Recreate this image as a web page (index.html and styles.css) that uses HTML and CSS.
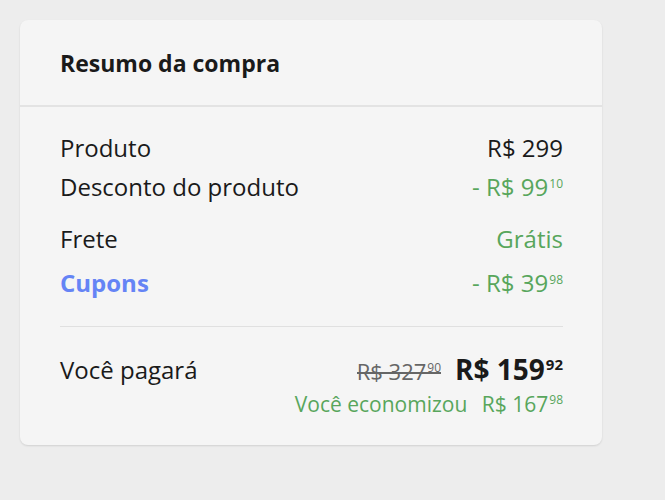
FILE: index.html
```html
<!DOCTYPE html>
<html lang="pt-BR">
<head>
    <meta charset="UTF-8">
    <meta name="viewport" content="width=device-width, initial-scale=1.0">
    <title>Resumo da compra</title>
    <link rel="stylesheet" href="styles.css">
</head>
<body>
    <div class="resumo">
        <div class="resumo-head">
            <h2>Resumo da compra</h2>
        </div>
        <div class="resumo-body">
            <ul class="linhas">
                <li class="linha">
                    <span>Produto</span>
                    <span class="valor">R$ 299</span>
                </li>
                <li class="linha">
                    <span>Desconto do produto</span>
                    <span class="valor verde">- R$ 99<sup>10</sup></span>
                </li>
                <li class="linha frete">
                    <span>Frete</span>
                    <span class="valor verde">Grátis</span>
                </li>
                <li class="linha cupons">
                    <span class="azul">Cupons</span>
                    <span class="valor verde">- R$ 39<sup>98</sup></span>
                </li>
            </ul>
            <div class="total">
                <span>Você pagará</span>
                <div class="total-valores">
                    <div class="precos">
                        <s class="antigo">R$ 327<sup>90</sup></s>
                        <strong class="final">R$ 159<sup>92</sup></strong>
                    </div>
                    <div class="economia">Você economizou <span>R$ 167<sup>98</sup></span></div>
                </div>
            </div>
        </div>
    </div>
</body>
</html>
```

FILE: styles.css
```css
*{
    margin:0;
    padding:0;
    list-style:none;
    box-sizing: border-box;
}
body{
    background-color: #ededed;
    font-family: "Open Sans", "Noto Sans", sans-serif;
    color: #1a1a1a;
    padding: 20px;
}
.resumo{
    width: 582px;
    background-color: #f5f5f5;
    border-radius: 8px;
    box-shadow: 0 1px 2px rgba(0,0,0,0.12);
}
.resumo-head{
    padding: 28px 40px 0;
    height: 87px;
    border-bottom: 2px solid #e3e3e3;
}
.resumo-head h2{
    font-size: 23px;
    font-weight: 700;
    line-height: 30px;
}
.resumo-body{
    padding: 21px 39px 28px 40px;
}
.linha{
    display: flex;
    justify-content: space-between;
    font-size: 24px;
    line-height: 39px;
}
.linha.frete{
    margin-top: 13px;
}
.linha.cupons{
    margin-top: 5px;
}
.linhas{
    padding-bottom: 24px;
    border-bottom: 1px solid #e0e0e0;
}
sup{
    font-size: 12px;
    line-height: 0;
    vertical-align: 8px;
    margin-left: 1px;
}
.verde{
    color: #58a65c;
}
.azul{
    color: #6584f5;
    font-weight: 700;
}
.total{
    display: flex;
    justify-content: space-between;
    padding-top: 23px;
    font-size: 24px;
    line-height: 39px;
}
.total-valores{
    text-align: right;
}
.precos{
    display: flex;
    align-items: baseline;
    justify-content: flex-end;
    gap: 14px;
}
/* risco continuo por cima dos centavos */
.antigo{
    color: #666;
    font-size: 22px;
    text-decoration: none;
    background: linear-gradient(#666, #666) no-repeat 0 55% / 100% 2px;
}
.antigo sup{
    font-size: 12px;
}
.final{
    font-size: 28px;
    font-weight: 700;
}
.final sup{
    font-size: 15px;
    vertical-align: 10px;
}
.economia{
    color: #58a65c;
    font-size: 21px;
    line-height: 26px;
}
.economia span{
    margin-left: 9px;
}
```
